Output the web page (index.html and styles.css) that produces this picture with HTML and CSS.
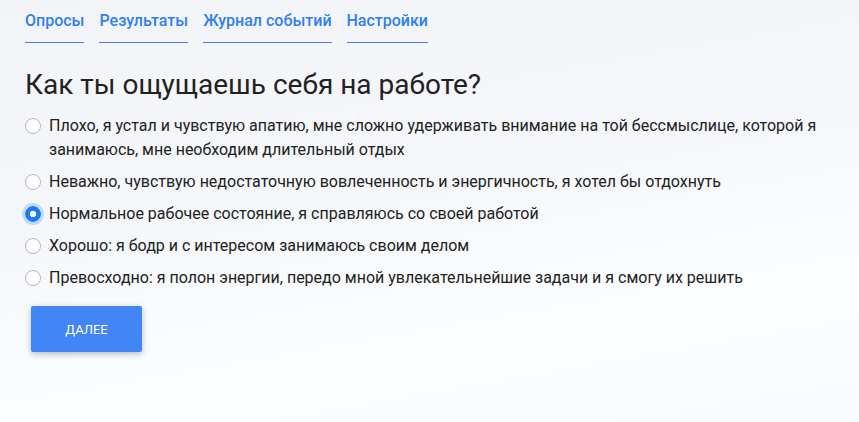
FILE: index.html
```html
<!DOCTYPE html>
<html lang="ru">
  <head>
    <meta charset="UTF-8" />
    <meta name="viewport" content="width=device-width, initial-scale=1.0" />
    <title>Опрос</title>
    <link rel="stylesheet" href="styles.css">
  </head>
  <body>
    <div class="page">
      <nav class="nav">
        <a href="#" class="nav-link">Опросы</a>
        <a href="#" class="nav-link">Результаты</a>
        <a href="#" class="nav-link">Журнал событий</a>
        <a href="#" class="nav-link">Настройки</a>
      </nav>

      <form class="survey">
        <h1>Как ты ощущаешь себя на работе?</h1>
        <label class="option">
          <input type="radio" name="mood" />
          <span>Плохо, я устал и чувствую апатию, мне сложно удерживать внимание на той бессмыслице, которой я занимаюсь, мне необходим длительный отдых</span>
        </label>
        <label class="option">
          <input type="radio" name="mood" />
          <span>Неважно, чувствую недостаточную вовлеченность и энергичность, я хотел бы отдохнуть</span>
        </label>
        <label class="option">
          <input type="radio" name="mood" checked />
          <span>Нормальное рабочее состояние, я справляюсь со своей работой</span>
        </label>
        <label class="option">
          <input type="radio" name="mood" />
          <span>Хорошо: я бодр и с интересом занимаюсь своим делом</span>
        </label>
        <label class="option">
          <input type="radio" name="mood" />
          <span>Превосходно: я полон энергии, передо мной увлекательнейшие задачи и я смогу их решить</span>
        </label>
        <button type="submit" class="next-btn">Далее</button>
      </form>
    </div>
  </body>
</html>
```

FILE: styles.css
```css
html,
body {
  height: 100%;
}

body {
  margin: 0;
  font-family: Roboto, "Noto Sans", Arial, sans-serif;
  color: #222;
  background: linear-gradient(170deg, #f3f4f7 0%, #f5f7fa 45%, #fdfeff 75%, #f9fafc 100%);
}

.page {
  padding: 0 25px;
}

.nav {
  display: flex;
  gap: 15px;
  padding-top: 11px;
}

.nav-link {
  color: #2f7ff0;
  font-size: 16px;
  font-weight: 500;
  text-decoration: none;
  line-height: 20px;
  padding-bottom: 11px;
  border-bottom: 1px solid #4a7dd8;
}

.survey h1 {
  font-size: 28px;
  font-weight: 400;
  color: #222;
  margin: 24px 0 11px;
  line-height: 36px;
}

.option {
  display: flex;
  align-items: flex-start;
  gap: 8px;
  font-size: 16px;
  line-height: 24px;
  color: #222;
  margin-bottom: 8px;
  cursor: pointer;
}

.option input {
  appearance: none;
  -webkit-appearance: none;
  flex: 0 0 16px;
  width: 16px;
  height: 16px;
  margin: 4px 0 0;
  border: 1px solid #b4b8bd;
  border-radius: 50%;
  background: #fff;
}

.option input:checked {
  border-color: #1b7bf2;
  background: radial-gradient(circle, #fff 0 3px, #1b7bf2 3.5px);
  box-shadow: 0 0 0 3px #c3dafc;
}

.next-btn {
  margin: 8px 0 0 6px;
  width: 111px;
  height: 46px;
  border: none;
  border-radius: 2px;
  background-color: #4285f4;
  color: #fff;
  font-family: inherit;
  font-size: 13px;
  font-weight: 400;
  text-transform: uppercase;
  box-shadow: 0 2px 5px rgba(0, 0, 0, 0.16), 0 2px 10px rgba(0, 0, 0, 0.12);
  cursor: pointer;
}
```
